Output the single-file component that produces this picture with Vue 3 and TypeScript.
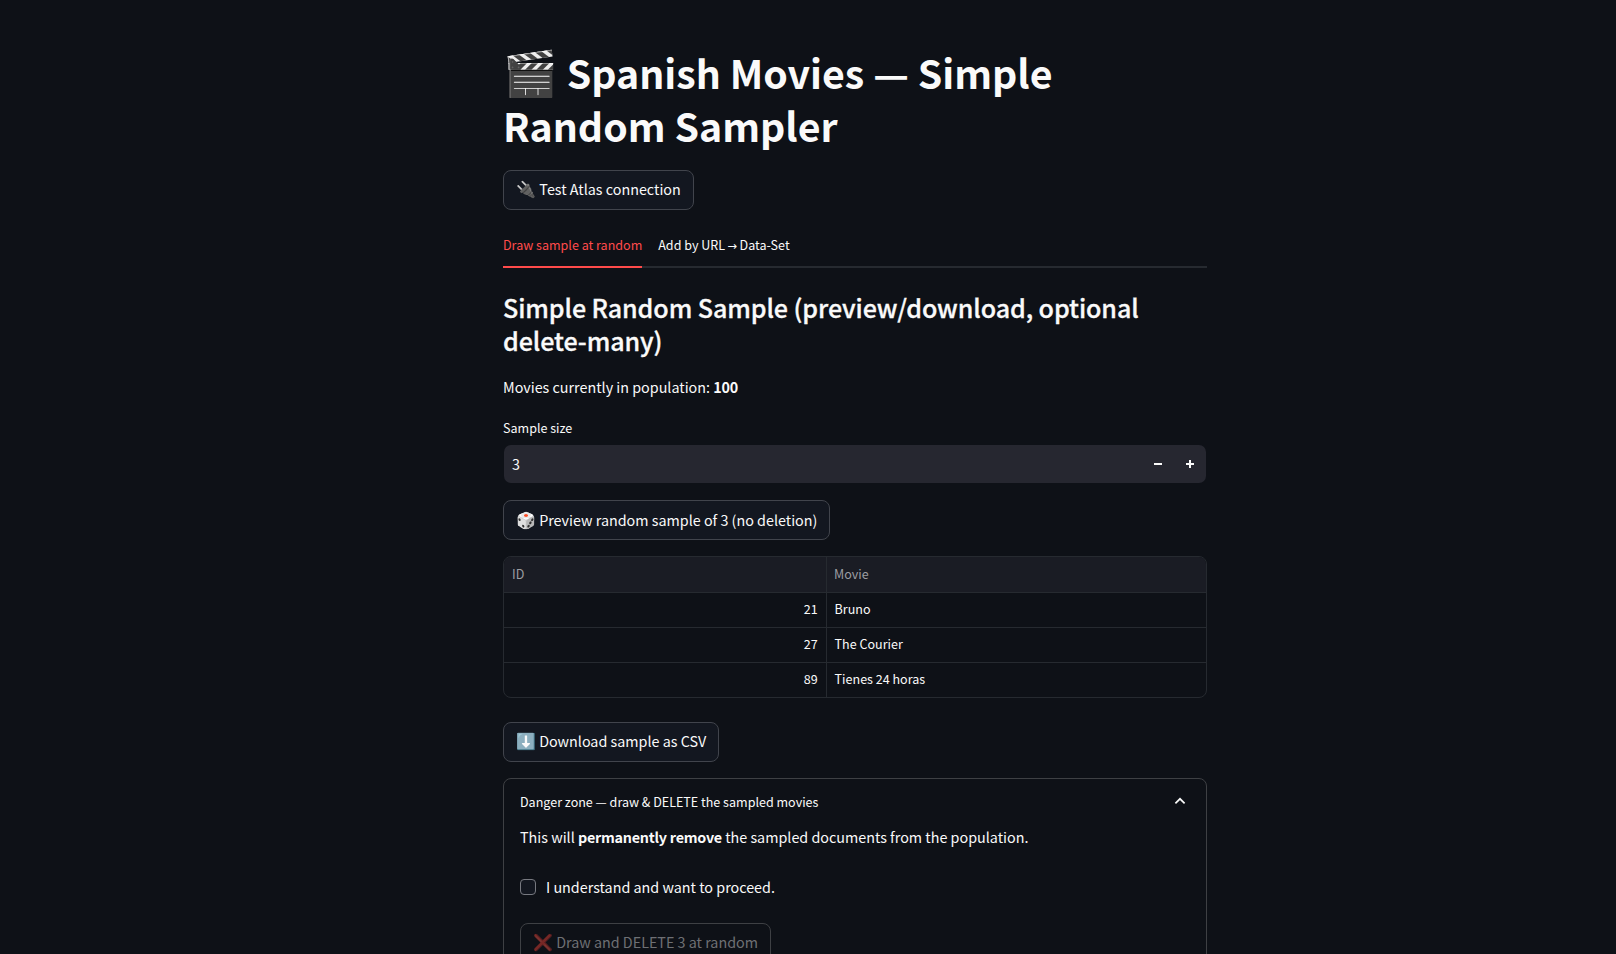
<script setup lang="ts">
import { ref } from 'vue'

interface Movie {
  id: number
  title: string
}

const population = 100
const sampleSize = ref(3)
const confirmed = ref(false)
const activeTab = ref(0)
const movies: Movie[] = [
  { id: 21, title: 'Bruno' },
  { id: 27, title: 'The Courier' },
  { id: 89, title: 'Tienes 24 horas' },
]

function step(delta: number): void {
  sampleSize.value = Math.min(population, Math.max(1, sampleSize.value + delta))
}
</script>

<template>
  <main class="page">
    <div class="column">
      <h1><span class="emoji">🎬</span> Spanish Movies — Simple Random Sampler</h1>
      <button class="btn test"><span class="emoji">🔌</span> Test Atlas connection</button>

      <nav class="tabs">
        <button class="tab" :class="{ active: activeTab === 0 }" @click="activeTab = 0">Draw sample at random</button>
        <button class="tab" :class="{ active: activeTab === 1 }" @click="activeTab = 1">Add by URL <span class="arrow">→</span> Data-Set</button>
      </nav>

      <h2>Simple Random Sample (preview/download, optional delete-many)</h2>
      <p class="text population">Movies currently in population: <strong>{{ population }}</strong></p>

      <label class="label">Sample size</label>
      <div class="number">
        <span class="value">{{ sampleSize }}</span>
        <button class="step" aria-label="Decrease" @click="step(-1)">
          <svg viewBox="0 0 8 8"><path d="M0 3h8v2H0z" /></svg>
        </button>
        <button class="step" aria-label="Increase" @click="step(1)">
          <svg viewBox="0 0 8 8"><path d="M3 0h2v3h3v2H5v3H3V5H0V3h3z" /></svg>
        </button>
      </div>

      <button class="btn preview"><span class="emoji">🎲</span> Preview random sample of {{ sampleSize }} (no deletion)</button>

      <div class="grid">
        <div class="row head"><span class="cell">ID</span><span class="cell">Movie</span></div>
        <div v-for="m in movies" :key="m.id" class="row">
          <span class="cell num">{{ m.id }}</span><span class="cell">{{ m.title }}</span>
        </div>
      </div>

      <button class="btn download"><span class="emoji">⬇️</span> Download sample as CSV</button>

      <section class="expander">
        <header class="summary">
          <span>Danger zone — draw &amp; DELETE the sampled movies</span>
          <svg class="chevron" viewBox="0 0 12 8"><path d="M1.4 6.3 6 1.8l4.6 4.5" /></svg>
        </header>
        <p class="text">This will <strong>permanently remove</strong> the sampled documents from the population.</p>
        <label class="check">
          <span class="box" @click="confirmed = !confirmed"></span>
          <span class="text">I understand and want to proceed.</span>
        </label>
        <button class="btn delete" :disabled="!confirmed"><span class="emoji">❌</span> Draw and DELETE {{ sampleSize }} at random</button>
      </section>
    </div>
  </main>
</template>

<style>
html,
body {
  background: #0e1117;
  overflow: hidden;
}
</style>

<style scoped>
* {
  box-sizing: border-box;
}
.page {
  height: 954px;
  overflow: hidden;
  padding: 46px 0 0 503px;
  background: #0e1117;
  color: #fafafa;
  font-family: "Noto Sans CJK SC", sans-serif;
  font-size: 14.33px;
}
.column {
  width: 704px;
  display: flex;
  flex-direction: column;
  align-items: stretch;
}
h1,
h2,
p {
  margin: 0;
}
button {
  font: inherit;
  color: inherit;
  background: none;
  border: 0;
  padding: 0;
  cursor: pointer;
}
strong {
  font-weight: 700;
  letter-spacing: -0.24px;
}
.emoji {
  font-family: "Noto Color Emoji", sans-serif;
  line-height: 1;
}
h1 {
  height: 106px;
  font-size: 39.28px;
  font-weight: 700;
  line-height: 52.8px;
}
h1 .emoji {
  font-size: 44px;
}
.btn {
  align-self: flex-start;
  flex: none;
  height: 40px;
  padding: 0 12px 2px;
  border: 1px solid #41444c;
  border-radius: 8px;
  background: #131720;
  line-height: 25.6px;
  white-space: nowrap;
}
.btn .emoji {
  font-size: 16px;
}
.test {
  margin-top: 18px;
  width: 191px;
}
.tabs {
  display: flex;
  gap: 16px;
  height: 42px;
  margin-top: 16px;
  box-shadow: inset 0 -2px #262a30;
}
.tab {
  height: 42px;
  padding-bottom: 3px;
  font-size: 12.54px;
  border-bottom: 2px solid transparent;
}
.tab.active {
  color: #ff4b4b;
  border-bottom-color: #ff4b4b;
}
.arrow {
  margin: 0 -0.4px;
  font-family: "DejaVu Sans", sans-serif;
  font-size: 11.5px;
  line-height: 1;
}
h2 {
  height: 67px;
  margin-top: 23px;
  font-size: 25.07px;
  font-weight: 500;
  line-height: 33.3px;
  letter-spacing: -0.09px;
  -webkit-text-stroke: 0.3px #fafafa;
}
.text {
  line-height: 26px;
}
.population {
  margin-top: 16px;
}
.label {
  height: 21px;
  margin-top: 17px;
  font-size: 12.54px;
  line-height: 21px;
}
.number {
  display: flex;
  align-items: center;
  height: 38px;
  margin: 7px 1px 0;
  padding-left: 8px;
  border-radius: 7px;
  background: #262730;
}
.value {
  flex: 1;
  padding-bottom: 2px;
}
.step {
  display: flex;
  align-items: center;
  justify-content: center;
  width: 32px;
  height: 38px;
}
.step svg {
  width: 8px;
  height: 8px;
  fill: #fafafa;
}
.preview {
  margin-top: 17px;
  width: 327px;
  padding-bottom: 0;
}
.grid {
  margin-top: 16px;
  height: 142px;
  border: 1px solid #262a30;
  border-radius: 8px;
  overflow: hidden;
  font-size: 12.54px;
}
.row {
  display: grid;
  grid-template-columns: 323px 1fr;
  height: 35px;
  line-height: 32px;
  border-bottom: 1px solid #262a30;
}
.row:last-child {
  border-bottom: 0;
}
.head {
  height: 36px;
  line-height: 33px;
  background: #1a1c24;
  color: #9c9da2;
}
.cell {
  padding: 0 8px 0 7.6px;
}
.head .cell:last-child {
  padding-left: 7px;
}
.cell:first-child {
  padding: 0 8.4px 0 8px;
  border-right: 1px solid #262a30;
}
.num {
  text-align: right;
}
.download {
  margin-top: 24px;
  width: 216px;
}
.expander {
  margin-top: 16px;
  height: 220px;
  padding: 0 16px;
  border: 1px solid #3e4044;
  border-radius: 8px;
}
.summary {
  display: flex;
  align-items: center;
  justify-content: space-between;
  height: 45px;
  padding-bottom: 1px;
  font-size: 12.54px;
}
.chevron {
  width: 12px;
  height: 8px;
  margin-right: 4px;
  fill: none;
  stroke: #fafafa;
  stroke-width: 1.7;
}
.check {
  display: flex;
  align-items: center;
  gap: 10px;
  height: 26px;
  margin-top: 24px;
}
.box {
  width: 16px;
  height: 16px;
  border: 1px solid #777980;
  border-radius: 4px;
  background: #131720;
}
.delete {
  display: block;
  width: 251px;
  margin-top: 23px;
  background: transparent;
  border-color: #3e4044;
  color: #6e7074;
}
.delete .emoji {
  opacity: 0.45;
}
</style>
